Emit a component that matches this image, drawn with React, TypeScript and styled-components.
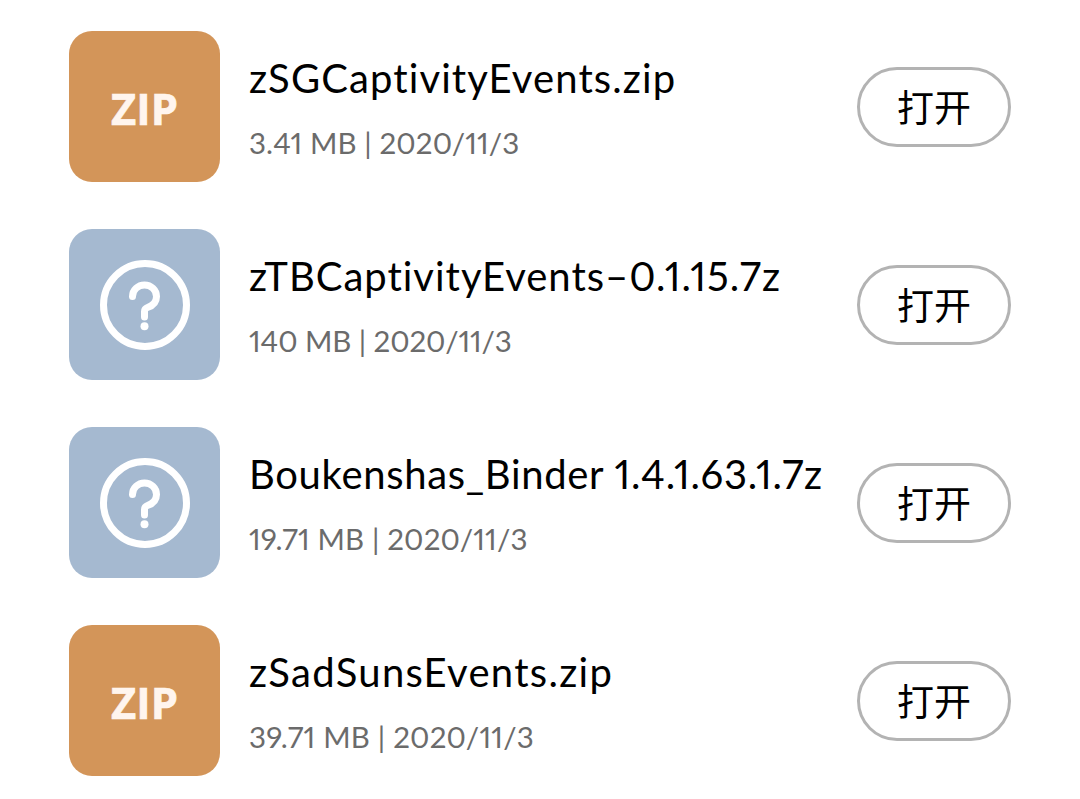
import React from "react"
import styled, { createGlobalStyle } from "styled-components"

const GlobalStyle = createGlobalStyle`
  * {
    box-sizing: border-box;
  }
  body {
    margin: 0;
    background-color: #fff;
    font-family: "Lato", "Noto Sans CJK SC", sans-serif;
  }
`

const FileList = styled.div`
  display: flex;
  flex-direction: column;
  gap: 47px;
  height: 799px;
  padding: 31px 69px 0;
  overflow: hidden;
`

const FileRow = styled.div`
  display: flex;
  align-items: center;
  flex-shrink: 0;
  height: 151px;
`

const FileIcon = styled.div<{ $color: string }>`
  display: flex;
  align-items: center;
  justify-content: center;
  flex-shrink: 0;
  width: 151px;
  height: 151px;
  border-radius: 23px;
  background-color: ${(props) => props.$color};
`

const ZipLabel = styled.span`
  padding-top: 4px;
  font-family: "Open Sans", sans-serif;
  font-size: 43.5px;
  font-weight: 700;
  line-height: 50px;
  letter-spacing: 0.1px;
  color: #fff5ee;
  -webkit-text-stroke: 0.6px #fff5ee;
`

const FileInfo = styled.div`
  flex: 1;
  min-width: 0;
  height: 151px;
  padding: 22px 0 0 29px;
  white-space: nowrap;
  font-feature-settings: "pnum" 1;
  font-variant-ligatures: none;
`

const FileName = styled.div<{ $spacing: number }>`
  font-size: 40px;
  line-height: 50px;
  letter-spacing: ${(props) => props.$spacing}px;
  color: #000;
`

const FileMeta = styled.div<{ $spacing: number }>`
  margin-top: 20px;
  font-size: 29.5px;
  line-height: 40px;
  letter-spacing: ${(props) => props.$spacing}px;
  color: #6b6b6b;
`

const OpenButton = styled.button`
  flex-shrink: 0;
  width: 154px;
  height: 80px;
  padding: 0 0 2px;
  border: 3px solid #b3b3b3;
  border-radius: 40px;
  background-color: #fff;
  font-family: "Noto Sans CJK SC", sans-serif;
  font-size: 37px;
  line-height: 50px;
  color: #000;
`

const QuestionIcon = () => (
  <svg width="91" height="91" viewBox="0 0 91 91" fill="none" stroke="#fff">
    <circle cx="46" cy="46" r="41.5" strokeWidth="7" />
    <path
      d="M33.5 37.5C33.5 31 39 26 45.5 26s12 5 12 11.5c0 6-4.500 9.500-9 11-2 .7-3 2-3 4V58"
      strokeWidth="7"
      strokeLinecap="round"
      strokeLinejoin="round"
    />
    <circle cx="45.5" cy="67.2" r="4" fill="#fff" stroke="none" />
  </svg>
)

const files = [
  { name: "zSGCaptivityEvents.zip", size: "3.41 MB", zip: true, nameSpacing: 1.1, metaSpacing: 0.1 },
  { name: "zTBCaptivityEvents–0.1.15.7z", size: "140 MB", zip: false, nameSpacing: 0.98, metaSpacing: -0.08 },
  { name: "Boukenshas_Binder 1.4.1.63.1.7z", size: "19.71 MB", zip: false, nameSpacing: 0.68, metaSpacing: 0.15 },
  { name: "zSadSunsEvents.zip", size: "39.71 MB", zip: true, nameSpacing: 1.3, metaSpacing: 0.2 },
]

const App = () => {
  return (
    <>
      <GlobalStyle />
      <FileList>
        {files.map((file) => (
          <FileRow key={file.name}>
            <FileIcon $color={file.zip ? "#d39559" : "#a5b9d0"}>
              {file.zip ? <ZipLabel>ZIP</ZipLabel> : <QuestionIcon />}
            </FileIcon>
            <FileInfo>
              <FileName $spacing={file.nameSpacing}>{file.name}</FileName>
              <FileMeta $spacing={file.metaSpacing}>{file.size} | 2020/11/3</FileMeta>
            </FileInfo>
            <OpenButton>打开</OpenButton>
          </FileRow>
        ))}
      </FileList>
    </>
  )
}

export default App
